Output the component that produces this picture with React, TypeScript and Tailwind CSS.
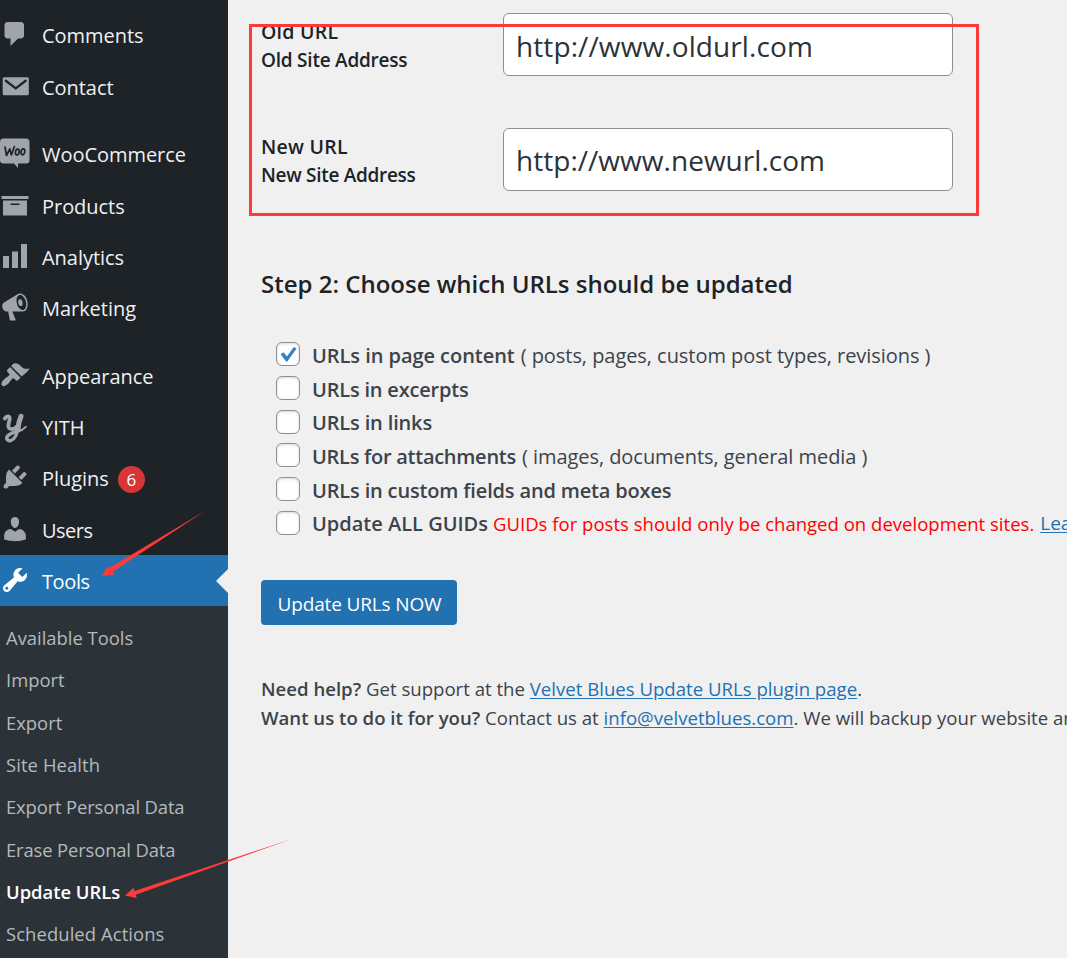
import React from "react";

const ICONS: Record<string, React.ReactNode> = {
  comments: <path d="M5 2h9c1.1 0 2 .9 2 2v7c0 1.1-.9 2-2 2h-2l-5 5v-5H5c-1.1 0-2-.9-2-2V4c0-1.1.9-2 2-2z" />,
  contact: (
    <>
      <rect x="1.8" y="4.2" width="17.4" height="12" rx="1" />
      <path d="M3.9 6.5l6.6 5.1 6.600-5.100" fill="none" stroke="#1d2327" strokeWidth="1.5" strokeLinecap="round" />
    </>
  ),
  products: <path d="M19 4v2H1V4h18zM2 7h16v10H2V7zm11 3V9H7v1h6z" />,
  analytics: <path d="M18 18V2h-4v16h4zm-6 0V7H8v11h4zm-6 0v-8H2v8h4z" />,
  marketing: (
    <path d="M18.15 5.94c.46 1.62.38 3.22-.02 4.48-.42 1.28-1.26 2.18-2.3 2.48-.16.06-.26.06-.4.06-.06.02-.12.02-.18.02-.06.02-.14.02-.22.02h-6.8l2.22 5.5c.02.14-.06.26-.14.34-.08.1-.24.16-.34.16H6.95c-.1 0-.26-.06-.34-.16-.08-.08-.16-.2-.14-.34l-1-5.5H4.25l-.02-.02c-.5.06-1.08-.18-1.54-.62s-.88-1.08-1.06-1.88c-.24-.8-.2-1.56-.02-2.2.18-.62.58-1.08 1.06-1.3l.02-.02 9-5.4c.1-.06.18-.1.24-.16.06-.04.14-.08.24-.12.16-.08.28-.12.5-.18 1.04-.3 2.24.1 3.22.98s1.84 2.24 2.26 3.86zm-2.58 5.98h-.02c.4-.1.74-.34 1.04-.7.58-.7.86-1.76.86-3.04 0-.64-.1-1.3-.28-1.98-.34-1.36-1.02-2.5-1.78-3.24s-1.68-1.1-2.46-.88c-.82.22-1.4.96-1.7 2-.32 1.04-.28 2.36.06 3.72.38 1.36 1 2.5 1.8 3.24.78.74 1.62 1.1 2.48.88zm-2.54-7.08c.22-.04.42-.02.62.04.38.16.76.48 1.02 1s.42 1.2.42 1.78c0 .3-.04.56-.12.8-.18.48-.44.84-.86.94-.34.1-.8-.06-1.14-.4s-.64-.86-.78-1.5c-.18-.62-.12-1.24.02-1.72s.48-.84.82-.94z" />
  ),
  appearance: (
    <path d="M14.48 11.06L7.41 3.99l1.5-1.5c.5-.56 2.3-.47 3.51.32 1.21.8 1.43 1.28 2.300 1.980.9.700 1.600 1.100 2.700 1.100 1.200 0 2.600-.500 2.400-.200-1.400 2.200-3.200 3.500-5.340 5.370zm-.71.71L6.7 4.7 4.93 6.47c-.39.39-.39 1.02 0 1.41l1.06 1.06c.39.39.39 1.03 0 1.42-.6.6-1.43 1.11-2.21 1.69-.35.26-.7.53-1.01.84C1.43 14.23.4 16.08 1.4 17.07c.99 1 2.84-.03 4.18-1.36.31-.31.58-.66.85-1.02.57-.78 1.08-1.61 1.69-2.21.39-.39 1.02-.39 1.41 0l1.06 1.06c.39.39 1.02.39 1.41 0z" />
  ),
  plugins: (
    <path d="M13.11 4.36L9.87 7.6 8 5.73l3.24-3.24c.35-.34 1.05-.2 1.56.32.52.51.66 1.21.31 1.55zm-8 1.77l.91-1.12 9.01 9.01-1.19.84c-.71.71-2.63 1.16-3.82 1.16H6.14L4.9 17.26c-.59.59-1.54.59-2.12 0-.59-.58-.59-1.53 0-2.12l1.24-1.24v-3.88c0-1.13.4-3.19 1.09-3.89zm7.26 3.97l3.24-3.24c.34-.35 1.04-.21 1.55.31.52.51.66 1.21.31 1.55l-3.24 3.25z" />
  ),
  users: (
    <path d="M10 9.25c-2.27 0-2.73-3.44-2.73-3.44C7 4.02 7.82 2 9.97 2c2.16 0 2.98 2.02 2.71 3.81 0 0-.41 3.44-2.68 3.44zm0 2.57L12.72 10c2.39 0 4.52 2.33 4.52 4.53v2.49s-3.65 1.13-7.24 1.13c-3.65 0-7.24-1.13-7.24-1.13v-2.49c0-2.25 1.94-4.48 4.47-4.48z" />
  ),
  tools: (
    <path d="M16.68 9.77c-1.34 1.34-3.3 1.67-4.95.99l-5.41 6.52c-.99.99-2.59.99-3.58 0s-.99-2.59 0-3.57l6.52-5.42c-.68-1.65-.35-3.61.99-4.95 1.28-1.28 3.12-1.62 4.72-1.06l-2.89 2.89 2.82 2.82 2.86-2.87c.53 1.58.18 3.39-1.08 4.65zM3.81 16.21c.4.39 1.04.39 1.43 0 .4-.4.4-1.04 0-1.43-.39-.4-1.03-.4-1.43 0-.39.39-.39 1.03 0 1.43z" />
  ),
  woo: (
    <g transform="scale(0.6667)">
      <path d="M3.500 0.500h22.500a3.500 3.500 0 0 1 3.500 3.500v18a3.500 3.500 0 0 1-3.500 3.500H18v4.500L14 25.500H3.500A3.500 3.500 0 0 1 0 22v-18A3.500 3.500 0 0 1 3.500 0.500z" />
      <g fill="none" stroke="#1d2327" strokeWidth="1.700" strokeLinecap="round" strokeLinejoin="round">
        <path d="M5 9l1.500 8.500 3.300-6.500 1.600 6 3-8.500" />
        <ellipse cx="17.300" cy="14" rx="1.800" ry="3" transform="rotate(12 17.300 14)" />
        <ellipse cx="22.900" cy="13.800" rx="1.800" ry="3" transform="rotate(12 22.900 13.800)" />
      </g>
    </g>
  ),
  yith: (
    <g transform="translate(0 1.900) scale(0.6667)" fill="none" stroke="currentColor" strokeLinecap="round" strokeLinejoin="round">
      <path d="M4.800 4.600C6.200 2.200 9.600 1.600 9.700 4.400c.1 2.600-1.600 5-1.300 8 .6 3.700 5.600 3.700 8.200.4" strokeWidth="3.800" />
      <path d="M21 2.500c-1.800 4-2.800 8.500-3.300 14" strokeWidth="5" />
      <path d="M18 13.500c-.7 5.500-2.300 11.800-7.200 13.200-3 .7-5-1.600-3.600-4 2.300-3.600 8.500-4.400 12-6.900" strokeWidth="3.400" />
      <path d="M17.500 17.800c3.500-1 6.300-2.600 8.300-4.800" strokeWidth="2" />
    </g>
  ),
};

function Item({ icon, label, badge, tight }: { icon: string; label: string; badge?: string; tight?: boolean }) {
  return (
    <li className="flex h-[51.300px] items-center">
      <svg viewBox="0 0 20 20" className="mb-0.5 size-[30px] shrink-0 overflow-visible fill-current text-[#a0a5aa]">
        {ICONS[icon]}
      </svg>
      <span
        className={`ml-3 pt-[2px] text-[20px] leading-[30px] text-[#f0f0f1] ${tight ? "tracking-[-0.5px]" : "tracking-[-0.04px]"}`}
      >
        {label}
      </span>
      {badge && (
        <span className="ml-[9px] mt-0.5 flex size-[27px] items-center justify-center rounded-full bg-[#d63638] text-[17px] leading-none text-white">
          {badge}
        </span>
      )}
    </li>
  );
}

const SUBMENU = [
  { label: "Available Tools", style: "" },
  { label: "Import", style: "" },
  { label: "Export", style: "" },
  { label: "Site Health", style: "tracking-[0.1px]" },
  { label: "Export Personal Data", style: "tracking-[-0.13px]" },
  { label: "Erase Personal Data", style: "tracking-[-0.13px]" },
  { label: "Update URLs", style: "font-semibold text-white" },
  { label: "Scheduled Actions", style: "tracking-[0.1px]" },
];

function Sidebar() {
  return (
    <aside className="h-full w-[228px] shrink-0 bg-[#1d2327] pt-[9.700px]">
      <ul>
        <Item icon="comments" label="Comments" />
        <Item icon="contact" label="Contact" />
      </ul>
      <ul className="mt-[16.500px]">
        <Item icon="woo" label="WooCommerce" />
        <Item icon="products" label="Products" />
        <Item icon="analytics" label="Analytics" />
        <Item icon="marketing" label="Marketing" />
      </ul>
      <ul className="mt-4">
        <Item icon="appearance" label="Appearance" />
        <Item icon="yith" label="YITH" />
        <Item icon="plugins" label="Plugins" badge="6" />
        <Item icon="users" label="Users" tight />
      </ul>
      <div className="flex h-[51px] items-center bg-[#2271b1] text-white">
        <svg viewBox="0 0 20 20" className="mb-0.5 size-[30px] fill-current">
          {ICONS.tools}
        </svg>
        <span className="ml-3 pt-[2px] text-[20px] leading-[30px] tracking-[-0.4px]">Tools</span>
        <svg viewBox="0 0 12 24" className="ml-auto h-6 w-3 fill-[#f0f0f1]">
          <path d="M12 0v24L0 12z" />
        </svg>
      </div>
      <ul className="h-full bg-[#2c3338] pl-1.5 pt-[11px] text-[18.400px] leading-[42.300px] text-[#b4b9be]">
        {SUBMENU.map((s) => (
          <li key={s.label} className={s.style}>
            {s.label}
          </li>
        ))}
      </ul>
    </aside>
  );
}

function UrlRow(props: { title: string; hint: string; value: string; hintStyle: string; inputStyle: string }) {
  return (
    <div className="flex h-[63px]">
      <label className="w-[242px] pt-[5px] font-semibold leading-7 text-[#1d2327]">
        <span className="block text-[19.500px] tracking-[0.25px]">{props.title}</span>
        <span className={`block text-[19px] ${props.hintStyle}`}>{props.hint}</span>
      </label>
      <input
        defaultValue={props.value}
        className={`h-[63px] w-[450px] rounded-md border border-[#8c8f94] bg-white px-3 text-[28px] text-[#2c3338] outline-none ${props.inputStyle}`}
      />
    </div>
  );
}

const OPTIONS = [
  { label: "URLs in page content", style: "tracking-[-0.05px]", note: "( posts, pages, custom post types, revisions )", checked: true },
  { label: "URLs in excerpts", style: "tracking-[-0.2px]" },
  { label: "URLs in links", style: "tracking-[-0.15px]" },
  { label: "URLs for attachments", style: "tracking-[-0.27px]", note: "( images, documents, general media )" },
  { label: "URLs in custom fields and meta boxes", style: "tracking-[-0.16px]" },
  { label: "Update ALL GUIDs", style: "", warning: "GUIDs for posts should only be changed on development sites." },
];

function Options() {
  return (
    <ul className="mt-[37px] ml-[15px] whitespace-nowrap text-[20px] leading-[33.700px] text-[#3c434a]">
      {OPTIONS.map((o) => (
        <li key={o.label} className="flex h-[33.700px] items-center">
          <span className="mb-[3px] flex size-6 shrink-0 items-center justify-center rounded-md border border-[#8c8f94] bg-white shadow-[inset_0_1px_3px_rgba(0,0,0,0.15)]">
            {o.checked && (
              <svg viewBox="0 0 24 24" className="size-6 shrink-0 fill-[#3582c4]">
                <path d="M4.600 12.300l3-2 3.300 4.200L17.800 4.900l2.800 1.700-9.100 12.700q-.8.800-1.600-.1z" />
              </svg>
            )}
          </span>
          <span className={`ml-3 font-semibold ${o.style}`}>{o.label}</span>
          {o.note && <span className="ml-[6px] tracking-[-0.050px]">{o.note}</span>}
          {o.warning && (
            <>
              <span className="ml-[5px] text-[18.500px] tracking-[0.02px] text-[#ff0000]">{o.warning}</span>
              <a className="ml-[6px] text-[19px] text-[#2271b1] underline underline-offset-2">Learn More</a>
            </>
          )}
        </li>
      ))}
    </ul>
  );
}

function Arrows() {
  return (
    <svg viewBox="0 0 300 958" className="pointer-events-none absolute top-0 left-0 h-[958px] w-[300px] fill-[#fe3b36]">
      <path d="M205 511L112.500 571.800l1.700 2.900-12.200 1.300 5.500-10.300 1.700 2.300z" />
      <path d="M293 838.500l-157.300 56.300 1 3.200-11.700-2.500 8.600-7.700.9 3.200z" />
    </svg>
  );
}

export default function App() {
  return (
    <div className="relative flex h-[958px] w-[1067px] overflow-hidden bg-[#f0f0f1] font-['Open_Sans',sans-serif]">
      <Sidebar />
      <main className="min-w-0 flex-1 overflow-hidden pt-[13px] pl-[33px]">
        <UrlRow
          title="Old URL"
          hint="Old Site Address"
          value="http://www.oldurl.com"
          hintStyle="tracking-[-0.23px]"
          inputStyle="pt-[3px] tracking-[0.1px]"
        />
        <div className="mt-[52px]">
          <UrlRow
            title="New URL"
            hint="New Site Address"
            value="http://www.newurl.com"
            hintStyle="tracking-[-0.3px]"
            inputStyle="pt-px tracking-[0.03px]"
          />
        </div>
        <h2 className="mt-[75px] text-[24px] font-semibold leading-9 text-[#1d2327]">
          Step 2: Choose which URLs should be updated
        </h2>
        <Options />
        <button className="mt-[39px] block h-[45px] w-[196px] whitespace-nowrap rounded-[4px] bg-[#2271b1] pt-1 pl-px text-[19px] tracking-[-0.14px] text-white">
          Update URLs NOW
        </button>
        <div className="mt-[49px] whitespace-nowrap text-[18.600px] leading-[29px] text-[#3c434a]">
          <p>
            <b className="font-semibold">Need help?</b> Get support at the{" "}
            <a className="text-[#2271b1] underline underline-offset-2">Velvet Blues Update URLs plugin page</a>.
          </p>
          <p>
            <b className="font-semibold">Want us to do it for you?</b> Contact us at{" "}
            <a className="text-[#2271b1] underline underline-offset-2">info@velvetblues.com</a>. We will backup your website and
          </p>
        </div>
      </main>
      <div className="pointer-events-none absolute top-6 left-[249px] h-48 w-[730px] border-3 border-[#fe3939]" />
      <Arrows />
    </div>
  );
}
